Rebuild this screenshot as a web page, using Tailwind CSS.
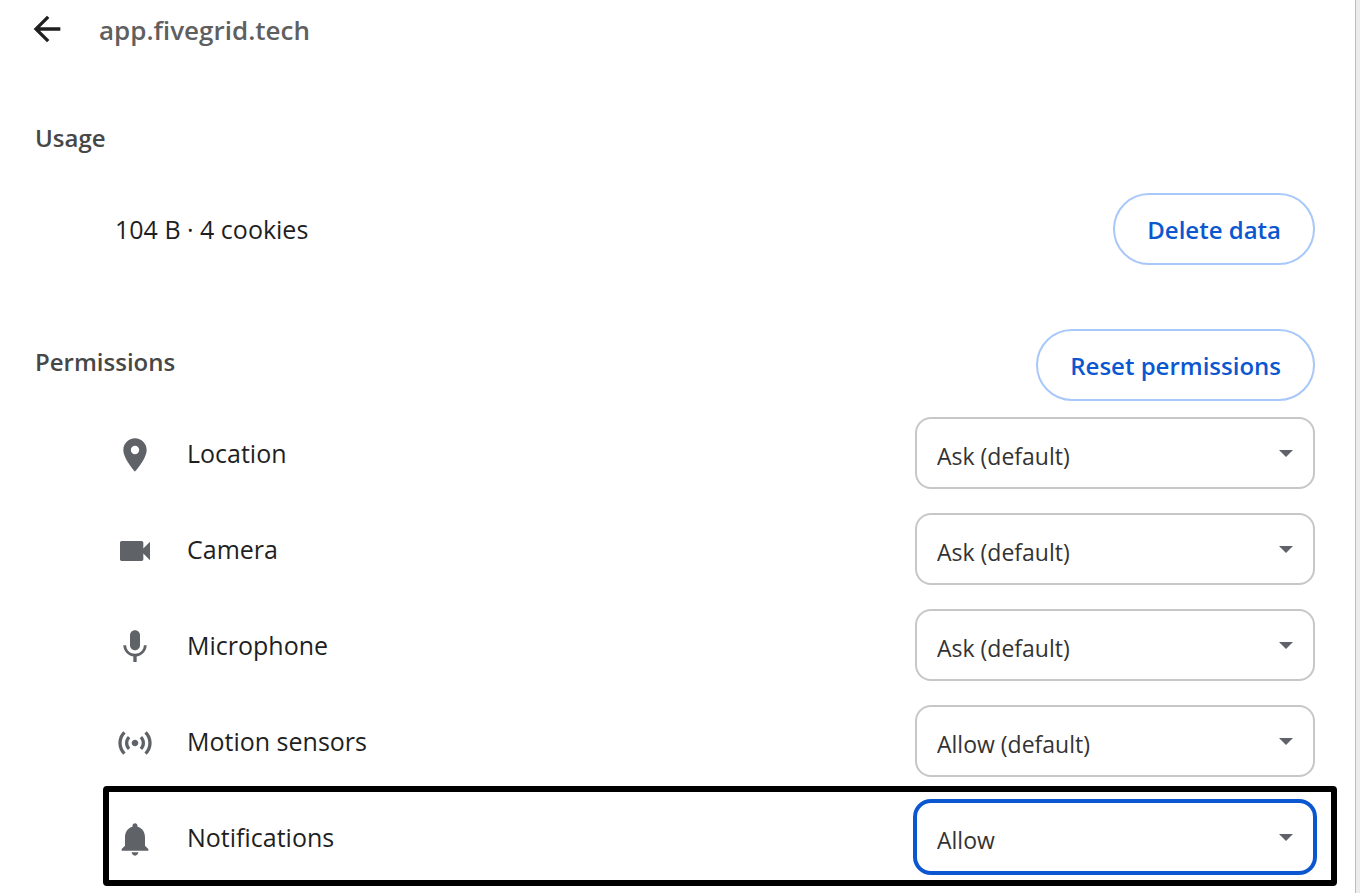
<!DOCTYPE html>
<html lang="en">
  <head>
    <meta charset="UTF-8" />
    <title>Site settings - app.fivegrid.tech</title>
    <script src="https://cdn.jsdelivr.net/npm/@tailwindcss/browser@4"></script>
  </head>
  <body class="bg-[#ececec] pr-1 font-['Open_Sans',sans-serif] text-[25px] text-[#1f1f1f]">
    <main class="min-h-screen border-r border-[#bdbdbd] bg-white pr-10 pb-1">
      <header class="flex h-[58px] items-center gap-8 pl-[27px]">
        <button type="button" aria-label="Back">
          <svg class="size-10" viewBox="0 0 24 24" fill="currentColor">
            <path d="m7.825 13 5.6 5.6L12 20l-8-8 8-8 1.425 1.4-5.6 5.6H20v2z" />
          </svg>
        </button>
        <h1 class="pt-0.5 text-[26px] font-semibold text-[#5f5f5f]">app.fivegrid.tech</h1>
      </header>

      <section class="pt-[42px]">
        <h2 class="flex h-[76px] items-center pl-[35px] text-2xl font-semibold text-[#474747]">Usage</h2>
        <div class="flex items-center justify-between pt-[17px] pl-[115px]">
          <span class="pt-0.5">104 B · 4 cookies</span>
          <button type="button" class="h-18 rounded-full border-2 border-[#a8c7fa] px-8 pt-0.5 text-2xl font-semibold text-[#0b57d0]">Delete data</button>
        </div>
      </section>

      <section class="pt-16">
        <div class="flex items-center justify-between pl-[35px]">
          <h2 class="pb-1.5 text-2xl font-semibold text-[#474747]">Permissions</h2>
          <button type="button" class="h-18 rounded-full border-2 border-[#a8c7fa] px-8 pt-0.5 text-2xl font-semibold text-[#0b57d0]">Reset permissions</button>
        </div>

        <div class="pt-1 pl-[115px]">
          <div class="flex h-24 items-center justify-between">
            <label for="location" class="flex items-center gap-8 pt-1">
              <svg class="size-10 text-[#5f6368]" viewBox="0 0 24 24" fill="currentColor">
                <path d="M12 2C8.13 2 5 5.13 5 9c0 5.25 7 13 7 13s7-7.75 7-13c0-3.87-3.13-7-7-7zm0 7.5m0 2a2.5 2.5 0 0 1 0-5 2.5 2.5 0 0 1 0 5z" />
              </svg>
              <span class="pb-0.5">Location</span>
            </label>
            <div class="relative w-100">
              <select id="location" class="h-18 w-full appearance-none rounded-2xl border-2 border-[#c7c7c7] bg-white px-5 pt-1.5 text-[23px] text-[#333]">
                <option>Ask (default)</option>
                <option>Allow</option>
                <option>Block</option>
              </select>
              <svg class="pointer-events-none absolute top-8 right-[21px] h-2 w-4 text-[#5f6368]" viewBox="0 0 16 8" fill="currentColor">
                <path d="M1 1h14L8 8z" />
              </svg>
            </div>
          </div>

          <div class="flex h-24 items-center justify-between">
            <label for="camera" class="flex items-center gap-8 pt-1">
              <svg class="size-10 text-[#5f6368]" viewBox="0 0 24 24" fill="currentColor">
                <path d="M17 10.5V7c0-.55-.45-1-1-1H4c-.55 0-1 .45-1 1v10c0 .55.45 1 1 1h12c.55 0 1-.45 1-1v-3.5l4 4v-11l-4 4z" />
              </svg>
              <span class="pb-0.5">Camera</span>
            </label>
            <div class="relative w-100">
              <select id="camera" class="h-18 w-full appearance-none rounded-2xl border-2 border-[#c7c7c7] bg-white px-5 pt-1.5 text-[23px] text-[#333]">
                <option>Ask (default)</option>
                <option>Allow</option>
                <option>Block</option>
              </select>
              <svg class="pointer-events-none absolute top-8 right-[21px] h-2 w-4 text-[#5f6368]" viewBox="0 0 16 8" fill="currentColor">
                <path d="M1 1h14L8 8z" />
              </svg>
            </div>
          </div>

          <div class="flex h-24 items-center justify-between">
            <label for="microphone" class="flex items-center gap-8 pt-1">
              <svg class="size-10 text-[#5f6368]" viewBox="0 0 24 24" fill="currentColor">
                <path d="M12 14c1.66 0 3-1.34 3-3V5c0-1.66-1.34-3-3-3S9 3.34 9 5v6c0 1.66 1.34 3 3 3z" />
                <path d="M17.3 11c0 3-2.54 5.1-5.3 5.1S6.7 14 6.7 11H5c0 3.41 2.72 6.23 6 6.72V21h2v-3.28c3.28-.48 6-3.3 6-6.72h-1.7z" />
              </svg>
              <span class="pb-0.5">Microphone</span>
            </label>
            <div class="relative w-100">
              <select id="microphone" class="h-18 w-full appearance-none rounded-2xl border-2 border-[#c7c7c7] bg-white px-5 pt-1.5 text-[23px] text-[#333]">
                <option>Ask (default)</option>
                <option>Allow</option>
                <option>Block</option>
              </select>
              <svg class="pointer-events-none absolute top-8 right-[21px] h-2 w-4 text-[#5f6368]" viewBox="0 0 16 8" fill="currentColor">
                <path d="M1 1h14L8 8z" />
              </svg>
            </div>
          </div>

          <div class="flex h-24 items-center justify-between">
            <label for="sensors" class="flex items-center gap-8 pt-1">
              <svg class="size-10 text-[#5f6368]" viewBox="0 0 24 24" fill="currentColor">
                <path d="M7.76 16.24C6.67 15.16 6 13.66 6 12s.67-3.16 1.76-4.24l1.42 1.42C8.45 9.9 8 10.9 8 12c0 1.1.45 2.1 1.17 2.83l-1.41 1.41zm8.48 0C17.33 15.16 18 13.66 18 12s-.67-3.16-1.76-4.24l-1.42 1.42C15.55 9.9 16 10.9 16 12c0 1.1-.45 2.1-1.17 2.83l1.41 1.41zM12 10c-1.1 0-2 .9-2 2s.9 2 2 2 2-.9 2-2-.9-2-2-2zm8 2c0 2.21-.9 4.21-2.35 5.65l1.42 1.42C20.88 17.26 22 14.76 22 12s-1.12-5.26-2.93-7.07l-1.42 1.42C19.1 7.79 20 9.79 20 12zM6.35 6.35 4.93 4.93C3.12 6.74 2 9.24 2 12s1.12 5.26 2.93 7.07l1.42-1.42C4.9 16.21 4 14.21 4 12s.9-4.21 2.35-5.65z" />
              </svg>
              <span class="pb-0.5">Motion sensors</span>
            </label>
            <div class="relative w-100">
              <select id="sensors" class="h-18 w-full appearance-none rounded-2xl border-2 border-[#c7c7c7] bg-white px-5 pt-1.5 text-[23px] text-[#333]">
                <option>Allow (default)</option>
                <option>Allow</option>
                <option>Block</option>
              </select>
              <svg class="pointer-events-none absolute top-8 right-[21px] h-2 w-4 text-[#5f6368]" viewBox="0 0 16 8" fill="currentColor">
                <path d="M1 1h14L8 8z" />
              </svg>
            </div>
          </div>

          <div class="relative flex h-24 items-center justify-between">
            <label for="notifications" class="flex items-center gap-8 pt-1">
              <svg class="size-10 text-[#5f6368]" viewBox="0 0 24 24" fill="currentColor">
                <path d="M12 22c1.1 0 2-.9 2-2h-4c0 1.1.89 2 2 2zm6-6v-5c0-3.07-1.64-5.64-4.5-6.32V4c0-.83-.67-1.5-1.5-1.5s-1.5.67-1.5 1.5v.68C7.63 5.36 6 7.92 6 11v5l-2 2v1h16v-1l-2-2z" />
              </svg>
              <span class="pb-0.5">Notifications</span>
            </label>
            <div class="relative w-100">
              <select id="notifications" class="h-18 w-full appearance-none rounded-2xl border-2 border-[#0b57d0] bg-white px-5 pt-1.5 text-[23px] text-[#333] ring-2 ring-[#0b57d0]">
                <option>Allow</option>
                <option>Ask (default)</option>
                <option>Block</option>
              </select>
              <svg class="pointer-events-none absolute top-8 right-[21px] h-2 w-4 text-[#5f6368]" viewBox="0 0 16 8" fill="currentColor">
                <path d="M1 1h14L8 8z" />
              </svg>
            </div>
            <!-- highlight frame -->
            <div class="pointer-events-none absolute -top-[3px] -right-[22px] -bottom-px -left-3 rounded-sm border-6 border-black"></div>
          </div>
        </div>
      </section>
    </main>
  </body>
</html>
